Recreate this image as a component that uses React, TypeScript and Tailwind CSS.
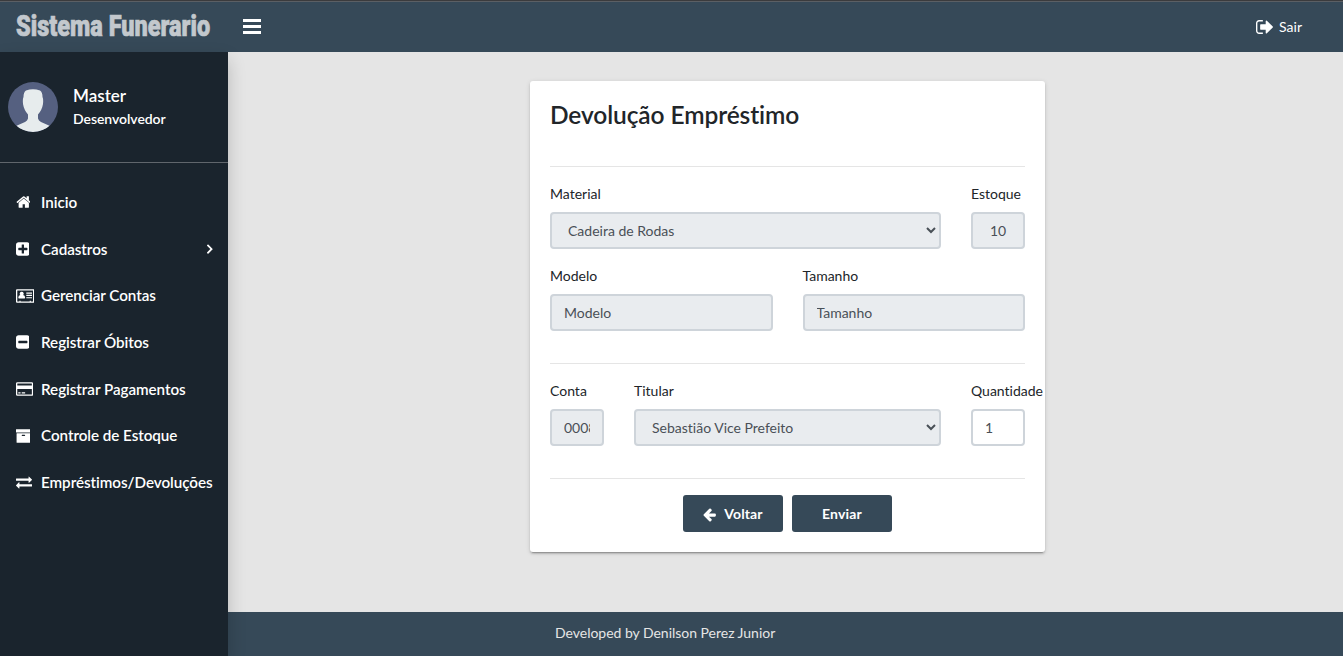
import React from "react";

const square =
  "M1664 416v960q0 119-84.500 203.500t-203.500 84.500h-960q-119 0-203.500-84.500t-84.500-203.500v-960q0-119 84.500-203.500t203.500-84.500h960q119 0 203.500 84.500t84.500 203.500z";

const icons = {
  home: {
    box: "26 0 1664 1792",
    d: "M1472 992v480q0 26-19 45t-45 19h-384v-384h-256v384h-384q-26 0-45-19t-19-45v-480q0-1 .5-3t.5-3l575-474 575 474q1 2 1 6zm223-69l-62 74q-8 9-21 11h-3q-13 0-21-7l-692-577-692 577q-12 8-24 7-13-2-21-11l-62-74q-8-10-7-23.500t11-21.500l719-599q32-26 76-26t76 26l244 204v-195q0-14 9-23t23-9h192q14 0 23 9t9 23v408l219 182q10 8 11 21.500t-7 23.500z",
  },
  plus: {
    box: "128 0 1536 1792",
    d: "M1408 960v-128q0-26-19-45t-45-19h-320v-320q0-26-19-45t-45-19h-128q-26 0-45 19t-19 45v320h-320q-26 0-45 19t-19 45v128q0 26 19 45t45 19h320v320q0 26 19 45t45 19h128q26 0 45-19t19-45v-320h320q26 0 45-19t19-45z" + square,
  },
  minus: {
    box: "128 0 1536 1792",
    d: "M1408 960v-128q0-26-19-45t-45-19h-896q-26 0-45 19t-19 45v128q0 26 19 45t45 19h896q26 0 45-19t19-45z" + square,
  },
  card: {
    box: "0 0 2048 1792",
    d: "M112 128H1936a112 112 0 0 1 112 112V1552a112 112 0 0 1-112 112H112a112 112 0 0 1-112-112V240a112 112 0 0 1 112-112zM144 272V1520H384V1440h128v80h1024v-80h128v80h240V272zM640 420a210 210 0 0 1 150 370q234 40 234 300 0 90-80 90H336q-80 0-80-90 0-260 234-300A210 210 0 0 1 640 420zM1152 1024h640v128h-640zM1152 768h640v128h-640zM1152 512h640v128h-640z",
  },
  credit: {
    box: "0 0 1920 1792",
    d: "M160 128H1760a160 160 0 0 1 160 160V1504a160 160 0 0 1-160 160H160a160 160 0 0 1-160-160V288a160 160 0 0 1 160-160zM176 272a32 32 0 0 0-32 32V512H1776V304a32 32 0 0 0-32-32zM144 896V1488a32 32 0 0 0 32 32H1744a32 32 0 0 0 32-32V896zM256 1260H512v140H256zM640 1260h384v140H640z",
  },
  archive: {
    box: "64 0 1664 1792",
    d: "M1088 832q0-26-19-45t-45-19h-256q-26 0-45 19t-19 45 19 45 45 19h256q26 0 45-19t19-45zm576-192v960q0 26-19 45t-45 19h-1408q-26 0-45-19t-19-45v-960q0-26 19-45t45-19h1408q26 0 45 19t19 45zm64-448v256q0 26-19 45t-45 19h-1536q-26 0-45-19t-19-45v-256q0-26 19-45t45-19h1536q26 0 45 19t19 45z",
  },
  exchange: {
    box: "0 0 1792 1792",
    d: "M1792 1184v192q0 13-9.500 22.500t-22.500 9.500h-1376v192q0 13-9.500 22.500t-22.500 9.500q-12 0-24-10l-319-320q-9-9-9-22 0-14 9-23l320-320q9-9 23-9 13 0 22.500 9.500t9.500 22.500v192h1376q13 0 22.500 9.500t9.500 22.500zm0-544q0 14-9 23l-320 320q-9 9-23 9-13 0-22.500-9.500t-9.500-22.500v-192h-1376q-13 0-22.500-9.500t-9.500-22.500v-192q0-13 9.500-22.500t22.500-9.500h1376v-192q0-14 9-23t23-9q12 0 24 10l319 319q9 9 9 23z",
  },
  angle: {
    box: "560 0 640 1792",
    d: "M1171 960q0 13-10 23l-466 466q-10 10-23 10t-23-10l-90-90q-10-10-10-23t10-23l353-353-353-353q-10-10-10-23t10-23l90-90q10-10 23-10t23 10l466 466q10 10 10 23z",
  },
  exit: {
    box: "64 0 1664 1792",
    d: "M704 1440q0 4 1 20t.5 26.500-3 23.500-10 19.500-20.500 6.500h-320q-119 0-203.500-84.500t-84.500-203.500v-704q0-119 84.500-203.500t203.500-84.500h320q13 0 22.500 9.500t9.500 22.500q0 4 1 20t.5 26.500-3 23.500-10 19.500-20.500 6.500h-320q-66 0-113 47t-47 113v704q0 66 47 113t113 47h312l11.500 1 11.500 3 8 5.500 7 9 2 13.500zm928-544q0 26-19 45l-544 544q-19 19-45 19t-45-19-19-45v-288h-448q-26 0-45-19t-19-45v-384q0-26 19-45t45-19h448v-288q0-26 19-45t45-19 45 19l544 544q19 19 19 45z",
  },
  back: {
    box: "128 0 1536 1792",
    d: "M1664 896v128q0 53-32.500 90.500t-84.500 37.500h-704l293 294q38 36 38 90t-38 90l-75 76q-37 37-90 37-52 0-91-37l-651-652q-37-37-37-90 0-52 37-91l651-650q38-38 91-38 52 0 90 38l75 74q38 38 38 91t-38 91l-293 293h704q52 0 84.500 37.500t32.500 90.500z",
  },
};

type IconName = keyof typeof icons;

function Icon({ name, className }: { name: IconName; className: string }) {
  return (
    <svg viewBox={icons[name].box} className={className} fill="currentColor" fillRule="evenodd" aria-hidden="true">
      <path d={icons[name].d} />
    </svg>
  );
}

const menu: { icon: IconName; label: string; more?: boolean }[] = [
  { icon: "home", label: "Inicio" },
  { icon: "plus", label: "Cadastros", more: true },
  { icon: "card", label: "Gerenciar Contas" },
  { icon: "minus", label: "Registrar Óbitos" },
  { icon: "credit", label: "Registrar Pagamentos" },
  { icon: "archive", label: "Controle de Estoque" },
  { icon: "exchange", label: "Empréstimos/Devoluções" },
];

const control =
  "block h-[37px] w-full rounded-[4px] border-2 border-[#ced4da] px-3 text-[14px] leading-[21px] text-[#495057] placeholder:text-[#495057] disabled:bg-[#e9ecef] bg-white disabled:opacity-100";

function Field({ label, className, children }: { label: string; className: string; children: React.ReactNode }) {
  return (
    <div className={className}>
      <label className="mb-2 block whitespace-nowrap leading-[21px]">{label}</label>
      {children}
    </div>
  );
}

function Header() {
  return (
    <header className="flex h-[52px] shrink-0 items-center border-t border-[#3b3b3d] bg-[#364958] text-white">
      <div className="flex h-full w-full items-center border-t border-[#5b5f64] pb-[2px]">
        <div className="w-[228px] shrink-0 pl-[16px]">
          <span className="block w-max origin-left scale-x-[0.81] whitespace-nowrap font-['Roboto'] text-[29px] font-black leading-[48px] text-[#c3c8cd] [-webkit-text-stroke:0.7px_#c3c8cd]">
            Sistema Funerario
          </span>
        </div>
        <button className="ml-[15px] flex w-[18px] flex-col gap-[3px]" aria-label="Menu">
          <span className="h-[3px] w-full bg-white" />
          <span className="h-[3px] w-full bg-white" />
          <span className="h-[3px] w-full bg-white" />
        </button>
        <a className="ml-auto mr-[41px] flex items-center gap-[5px]">
          <Icon name="exit" className="mt-px h-[20px] w-[18px]" />
          <span>Sair</span>
        </a>
      </div>
    </header>
  );
}

function Sidebar() {
  return (
    <aside className="z-10 w-[228px] shrink-0 bg-[#1a242d] text-white shadow-[0_8px_17px_rgba(0,0,0,0.2)]">
      <div className="flex h-[111px] items-center border-b border-[#60666c] pl-2">
        <svg viewBox="0 0 50 50" className="h-[50px] w-[50px] rounded-full">
          <rect width="50" height="50" fill="#556080" />
          <path
            d="M18 8.500Q25 6 32 8.500Q34.500 10 34.500 15Q35.500 17 35 22Q34 28 30 32.500V36.500Q30.500 38.500 33 40L42 44Q35 50 25 50T8 44L17 40Q19.500 38.500 20 36.500V32.500Q16 28 15 22Q14.500 17 15.500 15Q15.500 10 18 8.500Z"
            fill="#e7eced"
          />
        </svg>
        <div className="mb-[2px] ml-[15px] font-semibold">
          <p className="text-[17px] leading-[25px]">Master</p>
          <p className="tracking-[-0.05px] leading-[21px]">Desenvolvedor</p>
        </div>
      </div>
      <nav className="pt-4">
        {menu.map((item) => (
          <a key={item.label} className="flex h-[46.700px] items-center pl-[15.500px] pr-[15px] text-[15.200px] font-semibold">
            <span className="flex w-[25.500px] shrink-0">
              <Icon name={item.icon} className="h-[16px] w-auto" />
            </span>
            <span className="grow whitespace-nowrap tracking-[-0.040px]">{item.label}</span>
            {item.more && <Icon name="angle" className="-mt-px h-[17px] w-auto" />}
          </a>
        ))}
      </nav>
    </aside>
  );
}

export default function App() {
  return (
    <div className="flex h-[656px] w-[1343px] flex-col overflow-hidden bg-[#e5e5e5] font-['Lato',sans-serif] text-[14px] leading-[21px] text-[#212529] [font-variant-ligatures:none]">
      <Header />
      <div className="flex min-h-0 grow">
        <Sidebar />
        <div className="flex grow flex-col">
          <main className="flex grow items-start pl-[302px] pt-[29px]">
            <form className="h-[471px] w-[515px] rounded-[3px] bg-white p-5 shadow-[0_2px_2px_0_rgba(0,0,0,0.14),0_1px_5px_0_rgba(0,0,0,0.12),0_3px_1px_-2px_rgba(0,0,0,0.2)]">
              <h3 className="h-[65px] text-[24.500px] font-semibold leading-[27px] tracking-[-0.1px]">Devolução Empréstimo</h3>
              <div className="border-t border-[#e5e5e5] pt-4">
                <div className="flex gap-[30px]">
                  <Field label="Material" className="w-[391px] shrink-0">
                    <select disabled className={control}>
                      <option>Cadeira de Rodas</option>
                    </select>
                  </Field>
                  <Field label="Estoque" className="w-[54px]">
                    <input disabled defaultValue="10" className={control + " text-center"} />
                  </Field>
                </div>
                <div className="mt-4 flex gap-[30px]">
                  <Field label="Modelo" className="w-[222.500px]">
                    <input disabled placeholder="Modelo" className={control} />
                  </Field>
                  <Field label="Tamanho" className="w-[222.500px]">
                    <input disabled placeholder="Tamanho" className={control} />
                  </Field>
                </div>
              </div>
              <div className="mt-8 flex gap-[30px] border-t border-[#e5e5e5] pt-4">
                <Field label="Conta" className="w-[54px] shrink-0">
                  <input disabled defaultValue="0008" className={control} />
                </Field>
                <Field label="Titular" className="w-[307px] shrink-0">
                  <select disabled className={control}>
                    <option>Sebastião Vice Prefeito</option>
                  </select>
                </Field>
                <Field label="Quantidade" className="w-[54px]">
                  <input defaultValue="1" className={control} />
                </Field>
              </div>
              <div className="mt-8 flex justify-center gap-[9px] border-t border-[#e5e5e5] pt-4 font-bold text-white">
                <button type="button" className="flex h-[37px] w-[100px] items-center justify-center gap-2 rounded-[3px] bg-[#364958] tracking-[0.1px]">
                  <Icon name="back" className="mt-[2px] h-[15px] w-auto" />
                  Voltar
                </button>
                <button type="button" className="h-[37px] w-[100px] rounded-[3px] bg-[#364958] tracking-[0.2px]">
                  Enviar
                </button>
              </div>
            </form>
          </main>
          <footer className="h-[44px] shrink-0 bg-[#364958] pl-[327px] pt-[10px] tracking-[-0.020px] text-[#e5e5e5]">
            Developed by Denilson Perez Junior
          </footer>
        </div>
      </div>
    </div>
  );
}
